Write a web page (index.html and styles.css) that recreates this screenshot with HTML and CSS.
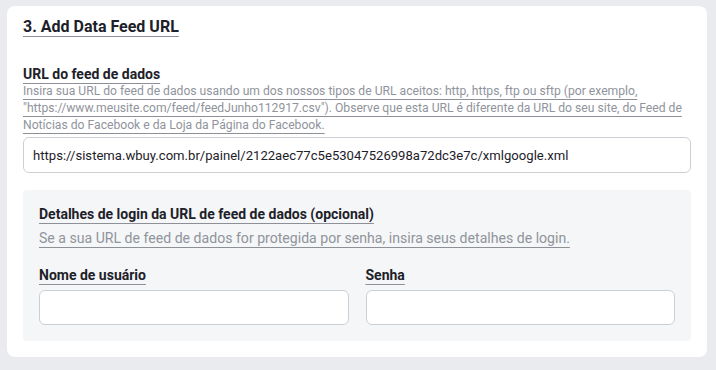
FILE: index.html
```html
<!DOCTYPE html>
<html lang="pt-BR">
<head>
  <meta charset="UTF-8" />
  <meta name="viewport" content="width=device-width, initial-scale=1" />
  <title>Add Data Feed URL</title>
  <link rel="stylesheet" href="styles.css">
</head>
<body>
  <div class="card">
    <h2 class="step-title"><span>3. Add Data Feed URL</span></h2>

    <div class="field">
      <label class="field-label" for="feed-url"><span>URL do feed de dados</span></label>
      <p class="field-help"><span>Insira sua URL do feed de dados usando um dos nossos tipos de URL aceitos: http, https, ftp ou sftp (por exemplo, "https://www.meusite.com/feed/feedJunho112917.csv"). Observe que esta URL é diferente da URL do seu site, do Feed de Notícias do Facebook e da Loja da Página do Facebook.</span></p>
      <input class="text-input" id="feed-url" type="text" value="https://sistema.wbuy.com.br/painel/2122aec77c5e53047526998a72dc3e7c/xmlgoogle.xml">
    </div>

    <div class="login-box">
      <h3 class="box-title"><span>Detalhes de login da URL de feed de dados (opcional)</span></h3>
      <p class="box-help"><span>Se a sua URL de feed de dados for protegida por senha, insira seus detalhes de login.</span></p>

      <div class="login-row">
        <div class="login-col">
          <label class="small-label" for="user"><span>Nome de usuário</span></label>
          <input class="text-input login-input" id="user" type="text">
        </div>
        <div class="login-col">
          <label class="small-label" for="pass"><span>Senha</span></label>
          <input class="text-input login-input" id="pass" type="password">
        </div>
      </div>
    </div>
  </div>
</body>
</html>
```

FILE: styles.css
```css
* {
  box-sizing: border-box;
}
body {
  margin: 0;
  background: #e9ebee;
  font-family: Roboto, 'Liberation Sans', sans-serif;
  color: #1d2129;
}

/* Main card */
.card {
  width: 700px;
  margin: 6px 0 0 7px;
  background: #fff;
  border-radius: 8px;
  padding: 10px 16px 16px;
}

/* Underlined texts */
.step-title span,
.field-label span,
.field-help span,
.box-title span,
.box-help span,
.small-label span {
  text-decoration: underline;
  text-decoration-color: #8d9096;
  text-decoration-thickness: 1px;
  text-decoration-skip-ink: none;
  text-underline-offset: 4px;
}

/* Heading */
.step-title {
  margin: 0;
  font-size: 16px;
  line-height: 22px;
  font-weight: 700;
}

.field {
  margin-top: 27px;
}

.field-label {
  display: block;
  font-size: 14px;
  line-height: 18px;
  font-weight: 700;
}

.field-help {
  margin: 0 0 3px;
  font-size: 12.15px;
  line-height: 17px;
  color: #90949c;
}

/* Text inputs */
.text-input {
  display: block;
  width: 100%;
  height: 36px;
  padding: 0 9px;
  border: 1px solid #ccd0d5;
  border-radius: 6px;
  background: #fff;
  font-family: Roboto, 'Liberation Sans', sans-serif;
  font-size: 13.1px;
  color: #1d2129;
  outline: none;
}

.login-input {
  height: 35px;
}

/* Login details box */
.login-box {
  margin-top: 17px;
  background: #f5f6f7;
  border-radius: 4px;
  padding: 15px 16px 16px;
}

.box-title {
  margin: 0;
  font-size: 14px;
  line-height: 18px;
  font-weight: 700;
}

.box-help {
  margin: 6px 0 0;
  font-size: 14.1px;
  line-height: 18px;
  color: #90949c;
}

.login-row {
  display: grid;
  grid-template-columns: 1fr 1fr;
  gap: 17px;
  margin-top: 19px;
}

.small-label {
  display: block;
  font-size: 14px;
  line-height: 18px;
  font-weight: 700;
  margin-bottom: 6px;
}
```
